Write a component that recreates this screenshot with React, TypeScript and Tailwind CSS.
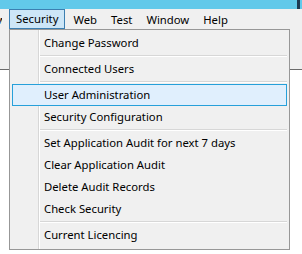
const menuBar = ['Security', 'Web', 'Test', 'Window', 'Help'];

type Entry = { label: string; active?: boolean } | 'sep';

const entries: Entry[] = [
  { label: 'Change Password' },
  'sep',
  { label: 'Connected Users' },
  'sep',
  { label: 'User Administration', active: true },
  { label: 'Security Configuration' },
  'sep',
  { label: 'Set Application Audit for next 7 days' },
  { label: 'Clear Application Audit' },
  { label: 'Delete Audit Records' },
  { label: 'Check Security' },
  'sep',
  { label: 'Current Licencing' },
];

export default function App() {
  return (
    <div
      className="relative w-[302px] h-[254px] overflow-hidden bg-white text-[11.3px] text-black"
      style={{ fontFamily: "'Noto Sans', 'Open Sans', sans-serif" }}
    >
      {/* Title bar strip */}
      <div className="h-[9px] bg-[#62c9ea] flex justify-end">
        <div className="w-[3px] h-[9px] mr-[2px] bg-[#1e3a52]" />
      </div>

      {/* Menu bar */}
      <div className="h-[21px] bg-[#f0f0f0] flex items-center">
        <span className="w-[5px] h-[21px] flex items-center overflow-hidden -ml-[3px] mr-[7px] leading-none">
          w
        </span>
        {menuBar.map((m) => (
          <div
            key={m}
            className={
              m === 'Security'
                ? 'h-[20px] -mt-[1px] px-[6px] mr-[1px] flex items-center border border-[#3c7fb1] bg-[#cde6f7] leading-none'
                : 'h-[20px] px-[7px] flex items-center leading-none'
            }
          >
            {m}
          </div>
        ))}
      </div>

      {/* Window content behind */}
      <div className="h-[40px] bg-[#f0f0f0] border-b border-[#6b6b6b]" />

      {/* Dropdown */}
      <div className="absolute left-[9px] top-[29px] w-[281px] h-[221px] border border-[#979797] pt-[2px] flex flex-col bg-[linear-gradient(to_right,#f0f0f0_28px,#d7d7d7_28px,#d7d7d7_29px,#ffffff_29px,#ffffff_30px,#f0f0f0_30px)]">
        {entries.map((e, i) =>
          e === 'sep' ? (
            <div key={i} className="h-[4px] shrink-0 ml-[30px] mr-[2px] pt-[1px] flex flex-col">
              <div className="h-[1px] bg-[#d7d7d7]" />
              <div className="h-[1px] bg-white" />
            </div>
          ) : (
            <div
              key={i}
              className={
                e.active
                  ? 'mx-[2px] h-[22px] shrink-0 flex items-center pl-[31px] pb-[1px] border border-[#26a0da] bg-[#e0effd] leading-none'
                  : 'mx-[2px] h-[22px] shrink-0 flex items-center pl-[32px] pb-[1px] leading-none'
              }
            >
              {e.label}
            </div>
          )
        )}
      </div>
    </div>
  );
}
